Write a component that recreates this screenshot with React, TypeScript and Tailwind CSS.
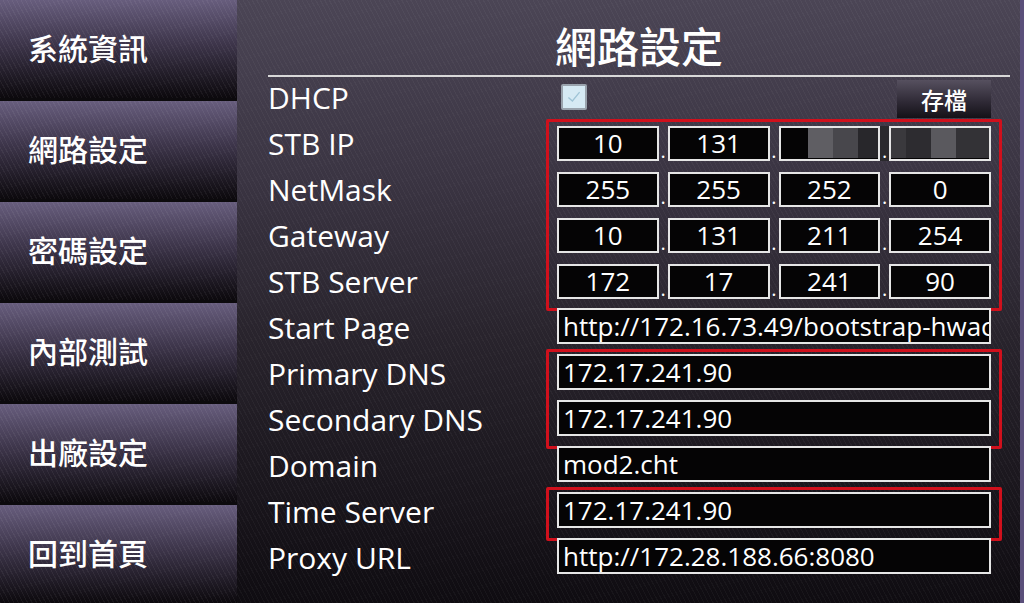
import React from "react";

const menu = ["系統資訊", "網路設定", "密碼設定", "內部測試", "出廠設定", "回到首頁"];

type IpRow = { label: string; parts: (string | null)[] };

const ipRows: IpRow[] = [
  { label: "STB IP", parts: ["10", "131", null, null] },
  { label: "NetMask", parts: ["255", "255", "252", "0"] },
  { label: "Gateway", parts: ["10", "131", "211", "254"] },
  { label: "STB Server", parts: ["172", "17", "241", "90"] },
];

const cjk = { fontFamily: '"Noto Sans CJK TC", "Noto Sans", sans-serif' };
const latin = { fontFamily: '"Open Sans", Roboto, sans-serif' };

function Label({ children }: { children: React.ReactNode }) {
  return (
    <div className="flex h-[46px] items-center pb-[4px] text-[30px] leading-none text-white" style={latin}>
      {children}
    </div>
  );
}

function TextField({ value }: { value: string }) {
  return (
    <div className="flex h-[46px] items-start pt-[1px]">
      <div
        className="flex h-[36px] w-full min-w-0 items-center overflow-hidden whitespace-nowrap border-2 border-[#e6e6e6] bg-[#050405] pl-[4px] pb-[1px] text-[26px] leading-none text-white"
        style={latin}
      >
        {value}
      </div>
    </div>
  );
}

function Blurred({ which }: { which: 3 | 4 }) {
  if (which === 3) {
    return (
      <div className="flex h-full w-full">
        <div className="w-[27px]" />
        <div className="w-[25px] bg-[#5f5e63]" />
        <div className="w-[25px] bg-[#48474c]" />
        <div className="flex-1 bg-[#28272b]" />
      </div>
    );
  }
  return (
    <div className="flex h-full w-full">
      <div className="w-[15px] bg-[#3a393d]" />
      <div className="w-[25px] bg-[#2d2c30]" />
      <div className="w-[25px] bg-[#5a595e]" />
      <div className="flex-1 bg-[#333236]" />
    </div>
  );
}

function IpField({ parts }: { parts: (string | null)[] }) {
  return (
    <div className="flex h-[46px] items-start pt-[3px]">
      {parts.map((p, i) => (
        <React.Fragment key={i}>
          {i > 0 && (
            <div
              className={
                "flex h-[35px] w-[9px] items-end justify-center text-[20px] leading-none text-white " +
                (p === null && i === 3 ? "bg-[#2a292d]" : "")
              }
              style={latin}
            >
              .
            </div>
          )}
          <div
            className="flex h-[35px] min-w-0 flex-1 items-center justify-center overflow-hidden border-2 border-[#e6e6e6] bg-[#050405] pb-[1px] text-[26px] leading-none text-white"
            style={latin}
          >
            {p === null ? <Blurred which={i === 2 ? 3 : 4} /> : p}
          </div>
        </React.Fragment>
      ))}
    </div>
  );
}

function RedBox({ children }: { children: React.ReactNode }) {
  return (
    <div className="-mx-[11px] -my-[4px] rounded-[2px] border-[3px] border-[#d0101c] px-[8px] py-[1px]">
      {children}
    </div>
  );
}

export default function App() {
  return (
    <div className="flex h-[603px] w-[1024px] overflow-hidden bg-[#5a4f7a]">
      {/* left menu */}
      <div className="flex w-[237px] shrink-0 flex-col gap-[3px] bg-[#0c0a0d]">
        {menu.map((m) => (
          <div
            key={m}
            className="flex flex-1 items-center bg-[image:repeating-linear-gradient(62deg,rgba(255,255,255,0.05)_0px,rgba(255,255,255,0.05)_1px,transparent_1px,transparent_4px),linear-gradient(to_bottom,#675d7d_0%,#3d354a_45%,#0c090d_100%)] pl-[28px] pb-[4px] text-[30px] font-medium leading-none text-white"
            style={cjk}
          >
            {m}
          </div>
        ))}
      </div>

      {/* settings panel */}
      <div
        className="mr-[4px] flex min-w-0 flex-1 flex-col bg-[image:repeating-linear-gradient(62deg,rgba(255,255,255,0.035)_0px,rgba(255,255,255,0.035)_1px,transparent_1px,transparent_4px),linear-gradient(to_bottom,#4b4555_0%,#3a3442_30%,#29242d_55%,#0f0c11_100%)] pl-[31px] pr-[10px]"
      >
        <div
          className="flex h-[75px] items-center justify-center pt-[14px] text-[42px] font-medium leading-none text-white"
          style={cjk}
        >
          網路設定
        </div>
        <div className="h-[2px] bg-[#d8d8d8]" />

        <div className="flex pr-[19px]">
          {/* labels */}
          <div className="flex w-[289px] shrink-0 flex-col">
            <Label>DHCP</Label>
            {ipRows.map((r) => (
              <Label key={r.label}>{r.label}</Label>
            ))}
            <Label>Start Page</Label>
            <Label>Primary DNS</Label>
            <Label>Secondary DNS</Label>
            <Label>Domain</Label>
            <Label>Time Server</Label>
            <Label>Proxy URL</Label>
          </div>

          {/* fields */}
          <div className="flex min-w-0 flex-1 flex-col">
            <div className="flex h-[46px] items-start justify-between">
              <div className="ml-[4px] mt-[7px] h-[26px] w-[26px] rounded-[2px] border-2 border-[#9aa3ad] bg-[#d6eaf4] p-[3px]">
                <svg viewBox="0 0 20 20" className="h-full w-full">
                  <path d="M3 10.5 L8 15 L17 4" fill="none" stroke="#9fc4d6" strokeWidth="1.6" />
                </svg>
              </div>
              <div
                className="mt-[3px] flex h-[38px] w-[94px] items-center justify-center bg-[linear-gradient(to_bottom,#56505f,#2d2834_60%,#141117)] text-[23px] font-medium leading-none text-white"
                style={cjk}
              >
                存檔
              </div>
            </div>

            <RedBox>
              {ipRows.map((r) => (
                <IpField key={r.label} parts={r.parts} />
              ))}
            </RedBox>

            <TextField value="http://172.16.73.49/bootstrap-hwacc" />

            <RedBox>
              <TextField value="172.17.241.90" />
              <TextField value="172.17.241.90" />
            </RedBox>

            <TextField value="mod2.cht" />

            <RedBox>
              <TextField value="172.17.241.90" />
            </RedBox>

            <TextField value="http://172.28.188.66:8080" />
          </div>
        </div>
      </div>
    </div>
  );
}
